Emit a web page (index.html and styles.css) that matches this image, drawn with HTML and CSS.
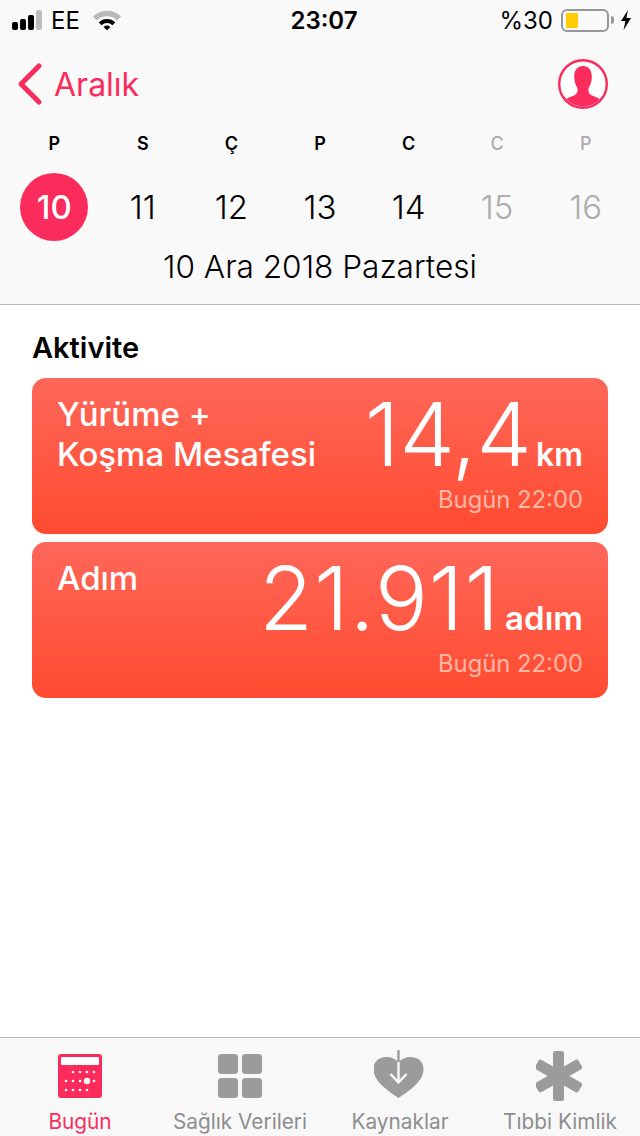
FILE: index.html
```html
<!DOCTYPE html>
<html lang="tr">
<head>
  <meta charset="UTF-8" />
  <meta name="viewport" content="width=device-width, initial-scale=1.0"/>
  <title>Sağlık</title>
  <link rel="stylesheet" href="styles.css">
</head>
<body>
  <div class="screen">
    <header class="top">
      <div class="status">
        <div class="status-left">
          <span class="signal"><i></i><i></i><i></i><i class="off"></i></span>
          <span>EE</span>
          <svg class="wifi" width="28" height="20" viewBox="0 0 28 20">
            <path d="M0 6.5 A20 20 0 0 1 28 6.5 L24.2 10.4 A14.6 14.6 0 0 0 3.8 10.4 Z" fill="#b9b9b9"/>
            <path d="M5.8 12.4 A11.4 11.4 0 0 1 22.2 12.4 L19.4 15.2 A7.6 7.6 0 0 0 8.6 15.2 Z" fill="#000"/>
            <path d="M10.6 17 A4.8 4.8 0 0 1 17.4 17 L14 20.4 Z" fill="#000"/>
          </svg>
        </div>
        <div class="clock">23:07</div>
        <div class="status-right">
          <span>%30</span>
          <span class="battery"><span class="battery-level"></span></span>
          <span class="battery-tip"></span>
          <svg class="bolt" width="12" height="20" viewBox="0 0 12 20">
            <path d="M8 0 L1 11 H5.4 L3.6 20 L11 8 H6.4 Z" fill="#000"/>
          </svg>
        </div>
      </div>

      <div class="nav">
        <a class="back">
          <svg width="28" height="44" viewBox="0 0 28 44">
            <path d="M23 4 L5 22 L23 40" fill="none" stroke="#fb2b5c" stroke-width="5" stroke-linecap="round" stroke-linejoin="round"/>
          </svg>
          <span>Aralık</span>
        </a>
        <svg class="avatar" width="50" height="50" viewBox="0 0 50 50">
          <defs><clipPath id="face"><circle cx="25" cy="25" r="22.5"/></clipPath></defs>
          <circle cx="25" cy="25" r="23.8" fill="#fff" stroke="#fb2b5c" stroke-width="2.4"/>
          <path clip-path="url(#face)" d="M25 7 C31 7 34 12 33.8 18 C33.6 23 32.4 26 30.6 29 C30 33 31 35 34 36.4 C38.5 38 42 39.5 45 43 V52 H5 V43 C8 39.5 11.5 38 16 36.4 C19 35 20 33 19.4 29 C17.6 26 16.4 23 16.2 18 C16 12 19 7 25 7 Z" fill="#fb2b5c"/>
        </svg>
      </div>

      <div class="week">
        <div class="day"><b>P</b><span class="num today">10</span></div>
        <div class="day"><b>S</b><span class="num">11</span></div>
        <div class="day"><b>Ç</b><span class="num">12</span></div>
        <div class="day"><b>P</b><span class="num">13</span></div>
        <div class="day"><b>C</b><span class="num">14</span></div>
        <div class="day off"><b>C</b><span class="num">15</span></div>
        <div class="day off"><b>P</b><span class="num">16</span></div>
      </div>
      <div class="date">10 Ara 2018 Pazartesi</div>
    </header>

    <main class="content">
      <h2>Aktivite</h2>
      <div class="card card-distance">
        <div class="card-title">Yürüme +<br>Koşma Mesafesi</div>
        <div class="card-side">
          <div class="value">14,4<span class="unit">km</span></div>
          <div class="time">Bugün 22:00</div>
        </div>
      </div>
      <div class="card card-steps">
        <div class="card-title">Adım</div>
        <div class="card-side">
          <div class="value">21.911<span class="unit">adım</span></div>
          <div class="time">Bugün 22:00</div>
        </div>
      </div>
    </main>

    <nav class="tabs">
      <div class="tab active">
        <svg width="44" height="44" viewBox="0 0 44 44">
          <rect width="44" height="44" rx="3" fill="#fb2b5c"/>
          <rect x="3" y="3" width="38" height="8" rx="1" fill="#fff"/>
          <g fill="#fff">
            <circle cx="15" cy="18" r="1.3"/><circle cx="22" cy="18" r="1.3"/><circle cx="29" cy="18" r="1.3"/><circle cx="36" cy="18" r="1.3"/>
            <circle cx="8" cy="27" r="1.3"/><circle cx="15" cy="27" r="1.3"/><circle cx="22" cy="27" r="1.3"/><circle cx="29" cy="27" r="3.2"/><circle cx="36" cy="27" r="1.3"/>
            <circle cx="8" cy="36" r="1.3"/><circle cx="15" cy="36" r="1.3"/><circle cx="22" cy="36" r="1.3"/><circle cx="29" cy="36" r="1.3"/>
          </g>
        </svg>
        <span>Bugün</span>
      </div>
      <div class="tab">
        <svg width="44" height="44" viewBox="0 0 44 44" fill="#9b9b9b">
          <rect width="20" height="20" rx="3.5"/><rect x="24" width="20" height="20" rx="3.5"/>
          <rect y="24" width="20" height="20" rx="3.5"/><rect x="24" y="24" width="20" height="20" rx="3.5"/>
        </svg>
        <span>Sağlık Verileri</span>
      </div>
      <div class="tab">
        <svg width="52" height="48" viewBox="1.5 1 52 48">
          <path d="M26 49 C14 41 1 32 1 20 C1 12 7 8 14 8 C19 8 23 10 26 13 C29 10 33 8 38 8 C45 8 51 12 51 20 C51 32 38 41 26 49 Z" fill="#9b9b9b"/>
          <path d="M26 1 V13" stroke="#9b9b9b" stroke-width="2.4" fill="none"/>
          <path d="M26 13 V33 M18 25 L26 33.5 L34 25" stroke="#f8f8f8" stroke-width="2.4" fill="none"/>
        </svg>
        <span>Kaynaklar</span>
      </div>
      <div class="tab tab-star">
        <svg width="48" height="50" viewBox="1.5 0 48 50" fill="#9b9b9b">
          <rect x="18.5" width="11" height="50" rx="2.5"/>
          <rect x="18.5" width="11" height="50" rx="2.5" transform="rotate(60 24 25)"/>
          <rect x="18.5" width="11" height="50" rx="2.5" transform="rotate(-60 24 25)"/>
        </svg>
        <span>Tıbbi Kimlik</span>
      </div>
    </nav>
  </div>
</body>
</html>
```

FILE: styles.css
```css
* {
  box-sizing: border-box;
}

html, body {
  margin: 0;
  height: 100%;
}

body {
  font-family: Inter, "Noto Sans", sans-serif;
  color: #000;
  background: #fff;
}

.screen {
  display: flex;
  flex-direction: column;
  width: 640px;
  height: 1136px;
  overflow: hidden;
}

.top {
  background: #f9f9f9;
  border-bottom: 1px solid #b8b8b8;
  height: 305px;
  flex: none;
}

.status {
  display: grid;
  grid-template-columns: 1fr auto 1fr;
  align-items: center;
  height: 40px;
  padding: 0 8px 0 12px;
  font-size: 24px;
}

.status-left, .status-right {
  display: flex;
  align-items: center;
}

.status-right {
  justify-content: flex-end;
}

.signal {
  display: flex;
  align-items: flex-end;
  gap: 2px;
  height: 20px;
  margin-right: 9px;
}

.signal i {
  display: block;
  width: 6px;
  background: #000;
  border-radius: 2px;
}

.signal i:nth-child(1) { height: 8px; }
.signal i:nth-child(2) { height: 11px; }
.signal i:nth-child(3) { height: 15px; }
.signal i:nth-child(4) { height: 20px; }
.signal i.off { background: #bcbcbc; }

.wifi {
  margin-left: 13px;
}

.clock {
  padding-left: 4px;
  font-weight: 600;
}

.battery {
  display: block;
  width: 48px;
  height: 23px;
  margin-left: 8px;
  padding: 2px 3px;
  border: 2px solid #979797;
  border-radius: 6px;
}

.battery-level {
  display: block;
  width: 12px;
  height: 15px;
  background: #ffcc00;
}

.battery-tip {
  width: 3px;
  height: 8px;
  margin: 0 6px 0 2px;
  background: #979797;
  border-radius: 0 3px 3px 0;
}

.nav {
  display: flex;
  justify-content: space-between;
  align-items: center;
  height: 82px;
  padding: 6px 32px 0 16px;
}

.back {
  display: flex;
  align-items: center;
  gap: 10px;
  color: #fb2b5c;
  font-size: 32px;
}

.week {
  display: grid;
  grid-template-columns: repeat(7, 1fr);
  padding: 0 10px;
  margin-top: 11px;
}

.day {
  display: flex;
  flex-direction: column;
  align-items: center;
}

.day b {
  font-size: 18px;
  font-weight: 600;
  line-height: 22px;
}

.num {
  display: flex;
  justify-content: center;
  align-items: center;
  width: 68px;
  height: 68px;
  margin-top: 18px;
  font-size: 33px;
  font-weight: 350;
}

.today {
  color: #fff;
  background: #fb2b5c;
  border-radius: 50%;
  font-weight: 500;
}

.day.off {
  color: #acacac;
}

.day.off b {
  font-weight: 500;
}

.date {
  margin-top: 6px;
  font-size: 31.6px;
  font-weight: 350;
  line-height: 40px;
  text-align: center;
}

.content {
  flex: 1;
  padding: 24px 32px 0;
}

h2 {
  margin: 0 0 12px;
  font-size: 29px;
  font-weight: 600;
  line-height: 37px;
}

.card {
  display: flex;
  justify-content: space-between;
  height: 156px;
  margin-bottom: 8px;
  padding: 16px 25px;
  color: #fff;
  background: linear-gradient(#ff6759, #ff4b30);
  border-radius: 14px;
}

.card-title {
  font-size: 33px;
  font-weight: 500;
  line-height: 40px;
}

.card-side {
  display: flex;
  flex-direction: column;
  align-items: flex-end;
  margin-top: -2px;
}

.value {
  font-size: 88px;
  font-weight: 260;
  line-height: 84px;
  white-space: nowrap;
}

.unit {
  font-size: 32px;
  font-weight: 600;
  line-height: 1;
  letter-spacing: 0;
}

.card-distance .unit {
  margin-left: 4px;
}

.card-steps .value {
  letter-spacing: 1px;
}

.card-steps .unit {
  margin-left: 5px;
  font-size: 33px;
}

.time {
  margin-top: 9px;
  color: #ffb8a6;
  font-size: 23.8px;
  line-height: 30px;
  letter-spacing: 0;
}

.tabs {
  display: grid;
  grid-template-columns: repeat(4, 1fr);
  flex: none;
  height: 99px;
  background: #f8f8f8;
  border-top: 1px solid #b8b8b8;
}

.tab {
  display: flex;
  flex-direction: column;
  align-items: center;
  justify-content: flex-end;
  color: #8e8e8e;
  font-size: 20.8px;
  line-height: 28px;
  white-space: nowrap;
}

.tab svg {
  margin-bottom: 10px;
}

.tab-star svg {
  margin-bottom: 7px;
}

.tab.active {
  color: #fb2b5c;
}
```
